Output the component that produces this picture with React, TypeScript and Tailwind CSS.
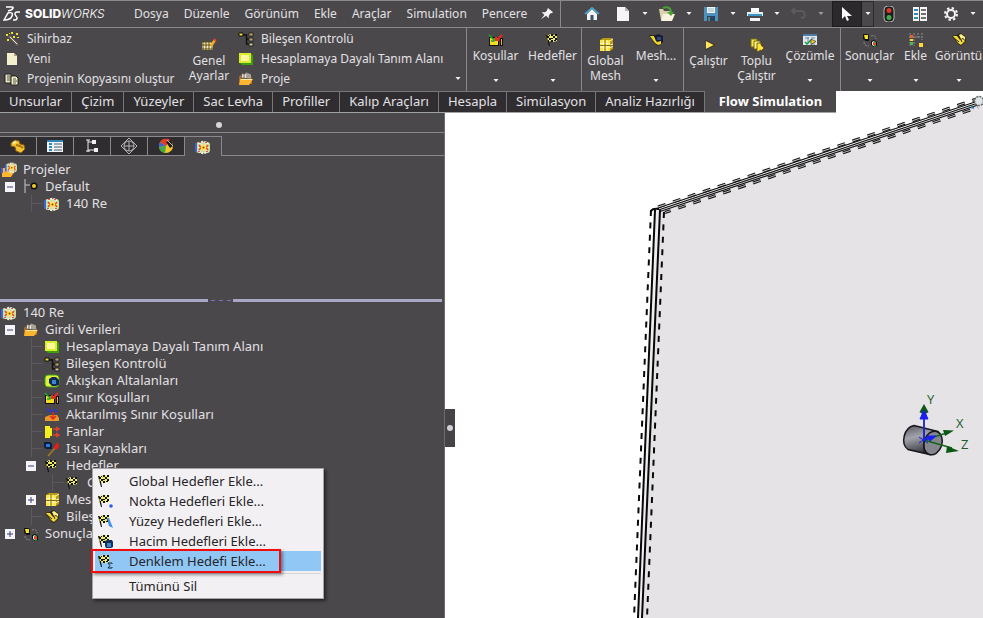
import type { ReactNode } from 'react';
import clsx from 'clsx';

type IconName = keyof typeof icons;

const flag = (
  <>
    <path d="M1 3h2l2 11H4z" fill="#111" />
    <path d="M2 4l3-2 3 1 4-1v7l-4 1-2-1-3 1z" fill="#f2f05a" />
    <path
      d="M2 4h2v2H2zM6 2h2v2H6zM10 2h2v2h-2zM4 6h2v2H4zM4 3h1v1H4zM8 4h2v2H8zM6 6h2v1H6zM10 6h2v2h-2zM3 8h1v2H3zM6 8h2v2H6zM9 8h2v1H9z"
      fill="#111"
    />
  </>
);

const flow = (
  <>
    <rect x="1" y="3" width="14" height="11" rx="3" fill="#bfe5a4" />
    <path d="M1 4v9" stroke="#3f62e0" strokeWidth="2" />
    <path d="M4 5c2-3 6-3 9 0M4 12c2 3 6 3 9 0" stroke="#f7f3da" strokeWidth="2" fill="none" strokeDasharray="2 1" />
    <path d="M4 3h2v1H4zM10 3h2v1h-2zM3 12h2v1H3zM11 12h2v1h-2z" fill="#e8505a" />
    <ellipse cx="8.500" cy="8.500" rx="5" ry="3.500" fill="#f6d9a0" />
    <path d="M4 6l2 2.500L4 11M13 6l-2 2.500 2 2.500" stroke="#e0462e" strokeWidth="1.500" fill="none" />
    <ellipse cx="8.500" cy="8.500" rx="2.800" ry="2" fill="#ffe92e" />
    <circle cx="8.500" cy="8.500" r="1" fill="#9c2a12" />
  </>
);

const folder = (
  <>
    <path d="M1 6l2-2h9l2 2v7H2z" fill="#b8791e" />
    <path d="M3 7l1-5 3 1 1-2 2 1 3 1v5z" fill="#e8e6dc" stroke="#4a4238" strokeWidth=".8" />
    <path d="M6 3v4M9 2v5M11 3v4" stroke="#4a4238" strokeWidth=".8" />
    <path d="M2 8h13l-4 6H1z" fill="#ffb52e" />
    <path d="M3 8.500h11" stroke="#ffe9a0" />
  </>
);

const folderFlow = (
  <>
    <path d="M1 6h4v3h9l-4 6H1z" fill="#ffb52e" />
    <path d="M0 6h2v5H0z" fill="#3f62e0" />
    <g transform="translate(4 -1) scale(.8)">{flow}</g>
  </>
);

const mesh = (
  <>
    <path d="M2 3l3-2h9l1 2v9l-3 2H2z" fill="#b99a12" />
    <path d="M2 3h10v11H2z" fill="#ffe23c" />
    <path d="M5.500 3v11M9 3v11M2 6.500h10M2 10h10M12 4l3-2M12 8l3-1M12 11l3-2" stroke="#fff9c8" />
    <path d="M7 3v11M2 8.500h13" stroke="#8a6c0a" />
  </>
);

const results = (
  <>
    <path d="M1 2h4l2 1v6H4L1 7z" fill="#111" />
    <path d="M2 3h4v4H3z" fill="#f5df24" />
    <path d="M9 9l3-1 3 2v4l-3 1-3-2z" fill="#111" />
    <path d="M10 10l2-1v5l-2-1z" fill="#f0efe9" />
    <path d="M12 9l2 1v4l-2 1z" fill="#2fae3a" />
    <path d="M11 10l3 1v2h-3z" fill="#e8452c" />
    <path d="M9 4c3-1 5 0 5 3M2 10c0 3 2 4 5 4" stroke="#8c8a8e" fill="none" strokeDasharray="2 1" />
  </>
);

const bracket = (
  <>
    <path d="M1 4l5-1 3-2 5 3 1 5-5 5-3-2z" fill="#2b2408" />
    <path d="M2 4h4l3 4 3-1 2 2-4 4-3-2z" fill="#f2da38" />
    <path d="M8 3l2-1 4 3v3l-2-2-2 1z" fill="#fbef8c" />
    <path d="M3 6l5 4M10 8l1 2" stroke="#2b2408" />
  </>
);

const sheet = (
  <>
    <path d="M3 2h7l3 3v9H3z" fill="#f3f1cd" />
    <path d="M10 2v3h3z" fill="#a9a67e" />
  </>
);

const domain = (
  <>
    <path d="M3 3h11l1 2v9H4l-2-2z" fill="#3f9d12" />
    <path d="M1 2h12v10H1z" fill="#d8ee2d" />
    <path d="M3 4h8v6H3z" fill="#fff7a0" />
  </>
);

const condition = (
  <>
    <path d="M1 5h10v9H1z" fill="#111" />
    <path d="M2 6h8v7H2z" fill="#f4dc22" />
    <path d="M12 6h3v8h-3z" fill="#111" />
    <path d="M13 7h1v6h-1z" fill="#ffb21c" />
    <path d="M1 3l5 5M6 6v3H3" stroke="#1aa52f" strokeWidth="1.500" fill="none" />
    <path d="M14 3L9 8M8 5v3h3" stroke="#ee2a1a" strokeWidth="2" fill="none" />
  </>
);

const component = (
  <>
    <path d="M1 2h4v3H1z" fill="#f0dc30" stroke="#111" />
    <path d="M5 4h4M8.500 3v10M8 8h3M8 13h3" stroke="#111" strokeWidth="1.500" />
    <path d="M11 2h4v3h-4zM11 7h4v3h-4zM11 12h4v3h-4z" fill="#d8c899" stroke="#222" />
    <path d="M12 3h2M12 8h2" stroke="#8b6a2c" />
  </>
);

const icons = {
  wand: (
    <>
      <path d="M5 5l9 9" stroke="#6b6b63" strokeWidth="2.500" />
      <path d="M6 6l7 7" stroke="#e6e1bb" />
      <path d="M2 3h2v2H2zM7 1h2v2H7zM12 2h2v2h-2zM9 5h2v2H9zM3 8h2v2H3zM13 6h2v1h-2zM5 2h1v1H5z" fill="#f4e22e" />
    </>
  ),
  sheet,
  copy: (
    <>
      <path d="M1 3h6v9H1z" fill="#e9e7c6" stroke="#222" />
      <path d="M3 5h3M3 7h3M3 9h3" stroke="#555" />
      <path d="M7 5h5l2 2v7H7z" fill="#f1eec0" stroke="#222" />
      <path d="M9 8h3M9 10h4M9 12h3" stroke="#555" />
    </>
  ),
  settings: (
    <>
      <path d="M1 5h11v8H1z" fill="#f7efc4" />
      <path d="M1 5h11M1 8h11M1 12h11M2 5v8M5 5v8M8 5v8M11 5v8" stroke="#5f4a12" />
      <path d="M14 3l-4 6" stroke="#f3b21c" strokeWidth="2.500" />
      <path d="M13 2l2 2" stroke="#e5412c" strokeWidth="2" />
    </>
  ),
  component,
  domain,
  folder,
  condition,
  flag,
  flagPoint: (
    <>
      {flag}
      <circle cx="14" cy="13" r="1.800" fill="#2b5be8" />
    </>
  ),
  flagSurface: (
    <>
      {flag}
      <path d="M10 5l2 0 4 10-4-2z" fill="#3d8ff0" />
    </>
  ),
  flagVolume: (
    <>
      {flag}
      <path d="M8 8l2-1h5l1 2v5l-2 1H9l-1-2z" fill="#12325c" />
      <path d="M10 10h4v4h-4z" fill="#3f86cc" />
    </>
  ),
  flagEquation: (
    <>
      {flag}
      <path d="M15 11v-1h-4l2 2.500-2 2.500h4v-1" stroke="#123" fill="none" />
    </>
  ),
  mesh,
  meshPart: (
    <>
      <path d="M1 3l5 0 3 1 5 1v6l-4 3-3-2z" fill="#2b2408" />
      <path d="M2 4h4l4 7v2l-3-2z" fill="#f0d52a" />
      <path d="M6 4l4-2 5 2v6l-3 2-4-3z" fill="#141c38" />
      <path d="M9 5h4v3H9z" fill="#33457c" />
      <path d="M9 10l4-1v3l-3 1z" fill="#f0d52a" />
    </>
  ),
  run: (
    <>
      <path d="M5 4l8 4-8 4z" fill="#ffe45c" />
      <path d="M4 3l10 5-10 5" stroke="#3b2e12" strokeWidth=".8" fill="none" />
    </>
  ),
  batch: (
    <>
      <path d="M2 2h6v8H2z" fill="#f2e74a" stroke="#7d6a13" />
      <path d="M5 4h6v8H5z" fill="#fff38a" stroke="#7d6a13" />
      <path d="M8 6h4v2l3 3-3 3v-1l-4 2z" fill="#ffe23a" stroke="#5d4c0c" strokeWidth=".8" />
    </>
  ),
  solve: (
    <>
      <path d="M1 2h14v11H1z" fill="#dce8ee" />
      <path d="M1 3h14" stroke="#4d7ba6" strokeWidth="2" />
      <path d="M3 6h4M9 6h4M9 12h4M6 5v7" stroke="#6d8aa0" />
      <path d="M3 10l2 2 4-4" stroke="#1f9c35" strokeWidth="1.500" fill="none" />
      <path d="M9 7l5 2.500-5 3z" fill="#f7cc2a" stroke="#333" strokeWidth=".7" />
    </>
  ),
  results,
  insert: (
    <>
      <path d="M2 1v13M6 1v13M10 1v5M14 1v7M1 5h13" stroke="#8c8a8e" strokeDasharray="2 1" />
      <path d="M2 3h3v3H2z" fill="#e5622c" />
      <path d="M2 7h3v2H2z" fill="#f5d52a" />
      <path d="M2 10h3v3H2z" fill="#4fba4f" />
      <path d="M11 11h4v4h-4z" fill="#ffd83a" />
    </>
  ),
  bracket,
  part: (
    <>
      <path d="M1 5l4-3 4 1 1 3 4 1 1 4-4 4-5-2-1-4-4-1z" fill="#f2c230" stroke="#8a5d10" />
      <path d="M6 7l4 1 3 2" stroke="#a67612" fill="none" strokeWidth="2" />
      <path d="M3 5l3-1" stroke="#fff0a8" strokeWidth="2" />
    </>
  ),
  props: (
    <>
      <path d="M0 2h16v12H0z" fill="#eef4f8" />
      <path d="M0 3h16" stroke="#2f87b8" strokeWidth="2" />
      <path d="M2 6h3M2 9h3M2 12h3" stroke="#2f87b8" strokeWidth="2" />
      <path d="M7 6h8M7 9h8M7 12h8" stroke="#4a5a66" />
    </>
  ),
  config: (
    <>
      <path d="M4 2v12M4 4h6M4 12h6M2 2h4M2 13h4" stroke="#e8e8e8" fill="none" />
      <path d="M8 2h4v4H8zM10 10h4v4h-4z" fill="#f1f1f1" />
    </>
  ),
  target: (
    <>
      <circle cx="8" cy="8" r="5" stroke="#b4b4b4" fill="none" />
      <path d="M8 0l8 8-8 8-8-8z" stroke="#b4b4b4" fill="none" />
      <path d="M3 8h10M8 3v10" stroke="#b4b4b4" />
    </>
  ),
  ball: (
    <>
      <circle cx="8" cy="8" r="7" fill="#f0c62c" />
      <path d="M8 8L2 4a7 7 0 0 0-1 5z" fill="#3a62d8" />
      <path d="M8 8L1 9a7 7 0 0 0 6 6z" fill="#43a848" />
      <path d="M8 8L2 4a7 7 0 0 1 10-2z" fill="#e23b2b" />
      <path d="M8 4l5-2 2 6-3 2z" fill="#1d1d1d" />
      <path d="M9 2l6 6" stroke="#c9b9b9" />
    </>
  ),
  flow,
  folderFlow,
  branch: (
    <>
      <path d="M2 0v14M2 6h5" stroke="#c9c9c9" />
      <circle cx="11" cy="7" r="3.500" fill="#111" />
      <circle cx="11" cy="7" r="2" fill="#f4c924" />
    </>
  ),
  fluid: (
    <>
      <rect width="14" height="12" x="1" y="2" rx="3" fill="#dff03a" stroke="#3f9d12" />
      <path d="M5 6l3-2h4l3 3v5l-3 1H8L5 10z" fill="#102b52" />
      <path d="M8 7h4v4H8z" fill="#3c83d6" />
    </>
  ),
  transferred: (
    <>
      <path d="M2 3q2-2 4 0t4 0 3 0M3 5q2-2 4 0t4 0 3 0" stroke="#2b36d8" fill="none" />
      <path d="M1 10l5-2h7l2 3v3H1z" fill="#e79a2b" />
      <path d="M9 5v6M6 9l3 3 3-3" stroke="#e22818" strokeWidth="1.500" fill="none" />
    </>
  ),
  fan: (
    <>
      <path d="M1 2h5v2h2v8H6v2H1z" fill="#f7ee1d" />
      <path d="M9 5h5M9 11h5M12 3l3 2-3 2M12 9l3 2-3 2" stroke="#e3402e" fill="none" strokeWidth="1.500" />
    </>
  ),
  heat: (
    <>
      <path d="M0 1h6l2 2v5H2L0 6z" fill="#0d1d3a" />
      <path d="M2 3h4v3H2z" fill="#2f78e0" />
      <path d="M4 15l8-9" stroke="#a77a20" strokeWidth="1.500" />
      <path d="M11 4l3-3 1 5-3 3-2-2z" fill="#ef1b14" />
    </>
  ),
} satisfies Record<string, ReactNode>;

function Icon({ name }: { name: IconName }) {
  return (
    <svg viewBox="0 0 16 16" className="size-4 shrink-0" aria-hidden="true">
      {icons[name]}
    </svg>
  );
}

function Caret() {
  return (
    <svg viewBox="0 0 6 4" className="h-1 w-1.5" aria-hidden="true">
      <path d="M.5 0h5L3 3z" fill="#f2f2f2" />
    </svg>
  );
}

const menus = ['Dosya', 'Düzenle', 'Görünüm', 'Ekle', 'Araçlar', 'Simulation', 'Pencere'];

function QuickButton({ label, children }: { label: string; children: ReactNode }) {
  return (
    <button aria-label={label} className="flex h-full w-[22px] items-center justify-center">
      <svg viewBox="0 0 16 16" className="size-4" aria-hidden="true">
        {children}
      </svg>
    </button>
  );
}

function QuickCaret({ label }: { label: string }) {
  return (
    <button aria-label={label} className="flex h-full w-[22px] items-center justify-center">
      <Caret />
    </button>
  );
}

function TitleBar() {
  return (
    <header className="flex h-[27px] shrink-0 items-center border-t border-[#8a888b] text-[12px]">
      <div className="flex w-[127px] shrink-0 items-center gap-1 pl-[3px] text-white">
        <svg viewBox="0 0 18 16" className="h-4 w-[18px]" fill="none" stroke="#fff" strokeWidth="1.500" aria-hidden="true">
          <path d="M3 1h6c2 0 1 2-1 3L5 5M1 14l4-7c4-1 5 0 4 3s-4 4-8 4z" />
          <path d="M17 6h-3c-2 0-3 2-1 4s1 4-1 4h-2" />
        </svg>
        <span className="font-['Inter',sans-serif] text-[12px]">
          <b className="font-extrabold">SOLID</b>
          <i className="font-light">WORKS</i>
        </span>
      </div>
      <nav className="flex shrink-0 gap-px">
        {menus.map((menu) => (
          <button key={menu} className="px-[7px]">
            {menu}
          </button>
        ))}
      </nav>
      <div className="flex h-full w-[27px] shrink-0 items-center justify-center border-r border-[#8a888b]">
        <svg viewBox="0 0 16 16" className="size-3.5" aria-hidden="true">
          <path d="M9 1l6 5-2 1-1 0-2 3 0 3-3-3-6 4 4-5-3-3 4 0 2-2z" fill="#f4f4f4" />
        </svg>
      </div>
      <div className="flex h-full shrink-0 items-center pl-5">
        <QuickButton label="Ana sayfa">
          <path d="M3 8l5-5 5 5v6H3z" fill="#f5f5f5" />
          <path d="M1 8l7-6 7 6" stroke="#4d9fc7" strokeWidth="2" fill="none" />
          <path d="M6.500 9h3v5h-3z" fill="#33566b" />
        </QuickButton>
        <span className="w-[9px]" />
        <QuickButton label="Yeni belge">
          <path d="M2 1h8l4 4v10H2z" fill="#f5f5f5" />
          <path d="M10 1v4h4z" fill="#b5b5b5" />
        </QuickButton>
        <QuickCaret label="Yeni seçenekleri" />
        <QuickButton label="Aç">
          <path d="M0 3h4l1 2h6v9H2z" fill="#d9d2ad" />
          <path d="M4 8h12l-3 7H2z" fill="#f7f3df" />
          <path d="M4 2c5-2 8 0 8 5" stroke="#4aa032" strokeWidth="2" fill="none" />
          <path d="M8 6h7l-3 4z" fill="#4aa032" />
        </QuickButton>
        <QuickCaret label="Aç seçenekleri" />
        <QuickButton label="Kaydet">
          <path d="M1 1h14v14H1z" fill="#4f91bd" />
          <path d="M4 1h8v6H4z" fill="#f1f5f7" />
          <path d="M4 10h8v5H4z" fill="#27465c" />
          <path d="M5 3h6M5 5h6M6 11v4" stroke="#9db5c4" />
        </QuickButton>
        <QuickCaret label="Kaydet seçenekleri" />
        <QuickButton label="Yazdır">
          <path d="M4 2h8v4H4z" fill="#fff" />
          <path d="M0 6h16v4H0z" fill="#e9eef1" />
          <path d="M1 9h14" stroke="#3f94c8" strokeWidth="2" />
          <path d="M3 12h10v3H3z" fill="#f5f5f5" />
        </QuickButton>
        <QuickCaret label="Yazdır seçenekleri" />
        <QuickButton label="Geri al">
          <path d="M1 5h9c5 0 5 7 0 7M4 2L1 5l3 3" stroke="#5c5a5d" strokeWidth="2" fill="none" />
        </QuickButton>
        <button aria-label="Geri al seçenekleri" className="flex h-full w-[22px] items-center justify-center opacity-50">
          <Caret />
        </button>
        <button aria-label="Seç" className="flex h-full w-[30px] items-center justify-center border border-[#1d1b1e] bg-[#2b292c]">
          <svg viewBox="0 0 12 16" className="h-4 w-3" aria-hidden="true">
            <path d="M1 1v12l3-3 2 5 2-1-2-4h5z" fill="#fff" />
          </svg>
        </button>
        <button aria-label="Seçim seçenekleri" className="flex h-full w-3 items-center justify-center border-y border-r border-[#2b292c]">
          <Caret />
        </button>
        <span className="w-1" />
        <QuickButton label="Yeniden oluştur">
          <rect x="3" width="10" height="16" rx="4" fill="#1d1d1d" stroke="#b5b5b5" />
          <circle cx="8" cy="4.500" r="2.500" fill="#e0392c" />
          <circle cx="8" cy="11.500" r="2.500" fill="#3fae4a" />
        </QuickButton>
        <span className="w-[9px]" />
        <QuickButton label="Dosya özellikleri">
          <path d="M1 1h6v14H1zM8 1h7v14H8z" fill="#f5f5f5" />
          <path d="M2 4h4M2 8h4M2 12h4" stroke="#3589b8" strokeWidth="2" />
          <path d="M9 4h5M9 8h5M9 12h5" stroke="#444" strokeWidth="1.500" />
        </QuickButton>
        <span className="w-[9px]" />
        <QuickButton label="Seçenekler">
          <circle cx="8" cy="8" r="4" fill="none" stroke="#f5f5f5" strokeWidth="2" />
          <circle cx="8" cy="8" r="6" fill="none" stroke="#f5f5f5" strokeWidth="2" strokeDasharray="2.400 2.300" />
        </QuickButton>
        <QuickCaret label="Diğer seçenekler" />
      </div>
    </header>
  );
}

function SmallCommand({ icon, label }: { icon: IconName; label: string }) {
  return (
    <button className="flex h-5 items-center gap-[7px] whitespace-nowrap">
      <Icon name={icon} />
      {label}
    </button>
  );
}

interface CommandProps {
  icon: IconName;
  label: string;
  width: string;
  menu?: boolean;
}

// Commands that open a menu sit higher, to leave room for the arrow.
function Command({ icon, label, width, menu }: CommandProps) {
  return (
    <button className={clsx('flex h-full shrink-0 flex-col items-center', width, menu ? 'pt-1' : 'pt-[9px]')}>
      <Icon name={icon} />
      <span className="leading-[15px]">{label}</span>
      {menu && (
        <span className="mt-auto pb-2">
          <Caret />
        </span>
      )}
    </button>
  );
}

function Ribbon() {
  return (
    <div className="flex h-16 shrink-0 overflow-hidden border-t border-[#8a888b] text-[12px]">
      <div className="flex w-[187px] shrink-0 flex-col items-start pl-1 pt-px">
        <SmallCommand icon="wand" label="Sihirbaz" />
        <SmallCommand icon="sheet" label="Yeni" />
        <SmallCommand icon="copy" label="Projenin Kopyasını oluştur" />
      </div>
      <Command icon="settings" label="Genel Ayarlar" width="w-[44px]" />
      <div className="flex w-[236px] shrink-0 flex-col items-start border-r border-[#8a888b] pl-[7px] pt-px">
        <SmallCommand icon="component" label="Bileşen Kontrolü" />
        <SmallCommand icon="domain" label="Hesaplamaya Dayalı Tanım Alanı" />
        <div className="flex w-full items-center justify-between pr-[5px]">
          <SmallCommand icon="folder" label="Proje" />
          <Caret />
        </div>
      </div>
      <div className="flex shrink-0 border-r border-[#8a888b]">
        <Command icon="condition" label="Koşullar" width="w-[57px]" menu />
        <Command icon="flag" label="Hedefler" width="w-[57px]" menu />
      </div>
      <div className="flex shrink-0 border-r border-[#8a888b]">
        <Command icon="mesh" label="Global Mesh" width="w-[47px]" />
        <Command icon="meshPart" label="Mesh..." width="w-[54px]" menu />
      </div>
      <div className="flex shrink-0 border-r border-[#8a888b]">
        <Command icon="run" label="Çalıştır" width="w-[49px]" />
        <Command icon="batch" label="Toplu Çalıştır" width="w-[47px]" />
        <Command icon="solve" label="Çözümle" width="w-[60px]" menu />
      </div>
      <Command icon="results" label="Sonuçlar" width="w-[57px]" menu />
      <Command icon="insert" label="Ekle" width="w-[35px]" menu />
      <Command icon="bracket" label="Görüntü" width="w-[51px]" menu />
    </div>
  );
}

const tabs = [
  'Unsurlar',
  'Çizim',
  'Yüzeyler',
  'Sac Levha',
  'Profiller',
  'Kalıp Araçları',
  'Hesapla',
  'Simülasyon',
  'Analiz Hazırlığı',
  'Flow Simulation',
];

function CommandTabs() {
  return (
    <nav className="z-10 col-span-2 col-start-1 row-start-1 flex h-[22px] w-fit border-b border-[#a0a3a5] text-[13px]">
      {tabs.map((tab) => (
        <button
          key={tab}
          className={clsx(
            'border-t border-[#77757a] whitespace-nowrap',
            tab === 'Flow Simulation' ? 'border-t-[#4a484b] bg-[#4a484b] px-[14px] font-bold text-white' : 'border-r bg-[#2f2d30] px-[9px]',
          )}
        >
          {tab}
        </button>
      ))}
    </nav>
  );
}

interface Node {
  label: string;
  icon: IconName;
  level: number;
  open?: boolean;
}

const projectNodes: Node[] = [
  { label: 'Projeler', icon: 'folderFlow', level: 0 },
  { label: 'Default', icon: 'branch', level: 1, open: true },
  { label: '140 Re', icon: 'flow', level: 2 },
];

const inputNodes: Node[] = [
  { label: '140 Re', icon: 'flow', level: 0 },
  { label: 'Girdi Verileri', icon: 'folder', level: 1, open: true },
  { label: 'Hesaplamaya Dayalı Tanım Alanı', icon: 'domain', level: 2 },
  { label: 'Bileşen Kontrolü', icon: 'component', level: 2 },
  { label: 'Akışkan Altalanları', icon: 'fluid', level: 2 },
  { label: 'Sınır Koşulları', icon: 'condition', level: 2 },
  { label: 'Aktarılmış Sınır Koşulları', icon: 'transferred', level: 2 },
  { label: 'Fanlar', icon: 'fan', level: 2 },
  { label: 'Isı Kaynakları', icon: 'heat', level: 2 },
  { label: 'Hedefler', icon: 'flag', level: 2, open: true },
  { label: 'G', icon: 'flag', level: 3 },
  { label: 'Mesh', icon: 'mesh', level: 2, open: false },
  { label: 'Bileş', icon: 'bracket', level: 2 },
  { label: 'Sonuçlar', icon: 'results', level: 1, open: false },
];

const indents = ['pl-px', 'pl-[5px]', 'pl-[26px]', 'pl-[47px]'];

function Tree({ nodes, children }: { nodes: Node[]; children?: ReactNode }) {
  return (
    <ul className="text-[13px] leading-[17px]">
      {nodes.map(({ label, icon, level, open }, i) => (
        <li key={i} className={clsx('relative flex h-[17px] items-center', indents[level])}>
          {level > 0 &&
            (open === undefined ? (
              <svg viewBox="0 0 18 17" className="h-[17px] w-[18px] shrink-0" aria-hidden="true">
                <path d="M5.500 0v17M5.500 8.500h11" stroke="#5b595c" />
              </svg>
            ) : (
              <button aria-label={open ? `${label} daralt` : `${label} genişlet`} className="mr-2 size-2.5 shrink-0">
                <svg viewBox="0 0 10 10" aria-hidden="true">
                  <path d="M0 0h10v10H0z" fill="#f4f4fa" />
                  <path d={open ? 'M2 5h6' : 'M2 5h6M5 2v6'} stroke="#3c3c78" />
                </svg>
              </button>
            ))}
          <Icon name={icon} />
          <span className="ml-1.5 whitespace-nowrap">{label}</span>
          {label === 'Hedefler' && children}
        </li>
      ))}
    </ul>
  );
}

const goalItems: { label: string; icon: IconName }[] = [
  { label: 'Global Hedefler Ekle...', icon: 'flag' },
  { label: 'Nokta Hedefleri Ekle...', icon: 'flagPoint' },
  { label: 'Yüzey Hedefleri Ekle...', icon: 'flagSurface' },
  { label: 'Hacim Hedefleri Ekle...', icon: 'flagVolume' },
  { label: 'Denklem Hedefi Ekle...', icon: 'flagEquation' },
];

function GoalMenu() {
  return (
    <div
      role="menu"
      className="absolute top-[11px] left-[92px] z-20 w-[232px] border border-[#a5a5a5] bg-[#f2f0f3] px-0.5 pt-0.5 text-[13px] text-[#262428] shadow-[2px_2px_3px_rgba(0,0,0,0.5)]"
    >
      {goalItems.map(({ label, icon }) => {
        const active = icon === 'flagEquation';
        return (
          <button
            key={label}
            role="menuitem"
            className={clsx('relative flex h-5 w-full items-center gap-4 pl-0.5 whitespace-nowrap', active && 'bg-[#91c7f5]')}
          >
            <Icon name={icon} />
            {label}
            {active && (
              <span className="absolute -top-0.5 -left-1 h-6 w-[190px] border-2 border-[#f40b0b] shadow-[2px_2px_3px_rgba(0,0,0,0.4)]" />
            )}
          </button>
        );
      })}
      <hr className="mt-0.5 border-[#d5d3d6]" />
      <button role="menuitem" className="flex h-6 w-full items-center pl-[34px]">
        Tümünü Sil
      </button>
    </div>
  );
}

const panelTabs: { label: string; icon: IconName }[] = [
  { label: 'Unsur Ağacı', icon: 'part' },
  { label: 'Özellikler', icon: 'props' },
  { label: 'Konfigürasyonlar', icon: 'config' },
  { label: 'Ölçüler', icon: 'target' },
  { label: 'Görünümler', icon: 'ball' },
  { label: 'Akış Analizi', icon: 'flow' },
];

function SidePanel() {
  return (
    <aside className="z-10 col-start-1 row-start-2 flex flex-col border-r border-[#6d6b6e] bg-[#4a484b]">
      <div className="flex h-5 items-center justify-center border-b border-[#8a888b] pt-1 pr-1.5">
        <span className="size-1.5 rounded-full bg-[#d8d6da]" />
      </div>
      <div className="flex h-[23px] pt-[3px]">
        {panelTabs.map(({ label, icon }) => (
          <button
            key={label}
            aria-label={label}
            className={clsx(
              'flex w-[37px] items-center justify-center border-t border-r border-[#8a888b]',
              icon !== 'flow' && 'border-b bg-[#2f2d30]',
            )}
          >
            <Icon name={icon} />
          </button>
        ))}
        <div className="flex-1 border-b border-[#8a888b]" />
      </div>
      <div className="h-[143px] pt-[5px]">
        <Tree nodes={projectNodes} />
      </div>
      <div className="flex items-center pr-0.5">
        <span className="h-[3px] w-[208px] bg-[#a9a7c3]" />
        <span className="flex flex-1 justify-center gap-1">
          <i className="h-px w-1 bg-[#7674b8]" />
          <i className="h-px w-1 bg-[#7674b8]" />
          <i className="h-px w-1 bg-[#7674b8]" />
        </span>
        <span className="h-[3px] w-[209px] bg-[#a9a7c3]" />
      </div>
      <div className="pt-0.5">
        <Tree nodes={inputNodes}>
          <GoalMenu />
        </Tree>
      </div>
    </aside>
  );
}

function Viewport() {
  return (
    <main className="relative col-start-2 row-span-2 row-start-1 flex items-center bg-white">
      <svg
        viewBox="445 91 538 527"
        preserveAspectRatio="xMinYMin slice"
        className="absolute inset-0 h-full w-full"
        fill="none"
        role="img"
        aria-label="Model"
      >
        <defs>
          <linearGradient id="barrel" x1="0" y1="0" x2="0.3" y2="1">
            <stop offset="0" stopColor="#55555d" />
            <stop offset="0.45" stopColor="#a3a3ad" />
            <stop offset="1" stopColor="#3a3a42" />
          </linearGradient>
        </defs>
        <path d="M655 210L985 101v520H640z" fill="#e5e3e6" />

        <g stroke="#111">
          <path d="M655 209L978 101M657 210.500L978 103M660 211.500L978 105" strokeWidth="1.200" />
          <path d="M658 207L978 98.500" strokeWidth="3" strokeDasharray="8 7.800" />
          <path d="M658 207L978 98.500" stroke="#fff" strokeWidth=".8" strokeDasharray="8 7.800" />
          <path d="M665 212.500L978 107.500" strokeWidth="3" strokeDasharray="8 7.800" strokeDashoffset="2" />
          <path d="M665 212.500L978 107.500" stroke="#e5e3e6" strokeWidth=".8" strokeDasharray="8 7.800" strokeDashoffset="2" />
        </g>

        <path d="M655 210h5l-18 408h-4z" fill="#efedf0" />
        <g stroke="#080808" strokeWidth="2">
          <path d="M655 210L638 618M660 210L642 618" />
          <path d="M651 210L634 618M664 212L647 618" strokeDasharray="6 6.400" />
          <path d="M651 212q0-4 8-3" />
        </g>
        <circle cx="979" cy="101" r="4.500" stroke="#66686b" strokeWidth="1.500" strokeDasharray="2 1" fill="#dfe4e7" />
        <path d="M971 107l3 1" stroke="#2b7fb0" strokeWidth="2" />

        <path d="M914 425.500l24 6-8 23-22-5c-8-6-4-22 6-24z" fill="url(#barrel)" stroke="#17171c" strokeWidth="1.500" />
        <ellipse cx="933" cy="443" rx="9" ry="12" transform="rotate(18 933 443)" fill="#85858f" stroke="#17171c" strokeWidth="1.500" />
        <path d="M924 428v24" stroke="#17171c" />
        <path d="M924 440V412M924 440l26-8M924 440l28 8" stroke="#12661a" strokeWidth="1.500" />
        <path d="M919.500 412l4.500-8 4.500 8-4.500 3zM954 430.500l-11-.5 2 6zM959 451l-12-5-1 7z" fill="#0b5714" />
        <path d="M924 440V417M924 440l10-3" stroke="#1a1ef0" strokeWidth="1.500" />
        <path d="M920 419l4-9 4 9zM936 436l-9 0 3 5zM919 437l9 6M919 443l9-6" fill="#1a1ef0" stroke="#1a1ef0" />
        <g fill="#1c5a2b" className="font-['Open_Sans',sans-serif] text-[13px]">
          <text x="927" y="404">Y</text>
          <text x="956" y="428">X</text>
          <text x="961" y="449">Z</text>
        </g>
      </svg>
      <button aria-label="Paneli daralt" className="relative mt-[146px] flex h-[38px] w-2.5 items-center justify-center bg-[#454346]">
        <span className="size-1.5 rounded-full bg-[#d2d0d4]" />
      </button>
    </main>
  );
}

export default function App() {
  return (
    <div className="flex min-h-screen flex-col overflow-hidden bg-[#4a484b] font-['Noto_Sans',sans-serif] text-[#e2e0e3]">
      <TitleBar />
      <Ribbon />
      <div className="grid flex-1 grid-cols-[445px_1fr] grid-rows-[auto_1fr]">
        <CommandTabs />
        <SidePanel />
        <Viewport />
      </div>
    </div>
  );
}
